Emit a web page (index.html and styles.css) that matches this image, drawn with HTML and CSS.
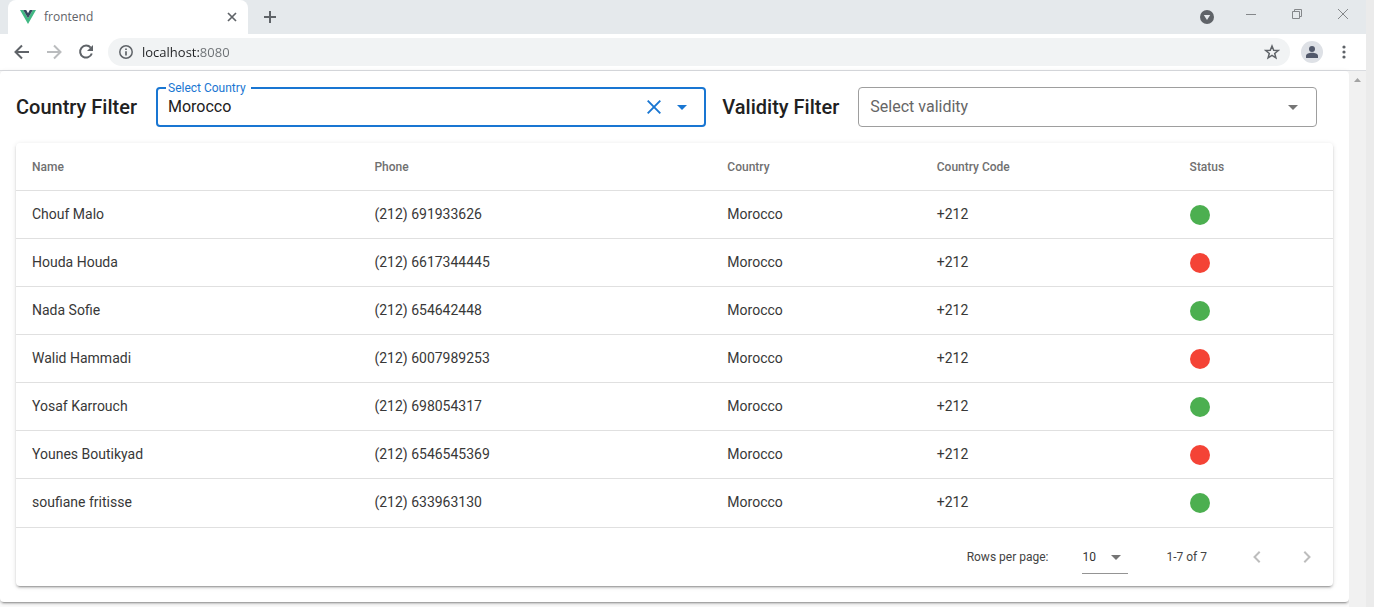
FILE: index.html
```html
<!DOCTYPE html>
<html lang="en">
<head>
<meta charset="utf-8">
<title>frontend</title>
<link rel="stylesheet" href="styles.css">
</head>
<body>
<div class="window">
  <header class="chrome">
    <div class="tabstrip">
      <div class="tab">
        <svg class="logo" width="16" height="16" viewBox="0 0 16 16"><path fill="#41b883" d="M0 1h3.2L8 9.3 12.8 1H16L8 15z"/><path fill="#35495e" d="M3.2 1h3L8 4.2 9.8 1h3L8 9.3z"/></svg>
        <span class="tab-title">frontend</span>
        <button class="plain tab-close" aria-label="Close tab"><svg width="10" height="10" viewBox="0 0 10 10" fill="none" stroke="#5f6368" stroke-width="1.7"><path d="M1 1l8 8M9 1L1 9"/></svg></button>
      </div>
      <button class="plain new-tab" aria-label="New tab"><svg width="12" height="12" viewBox="0 0 12 12" fill="none" stroke="#5f6368" stroke-width="2"><path d="M6 0v12M0 6h12"/></svg></button>
      <div class="window-controls">
        <button class="plain search-tabs" aria-label="Search tabs"><svg width="14" height="14" viewBox="0 0 14 14"><circle cx="7" cy="7" r="7" fill="#5f6368"/><path fill="#e7eaed" d="M3.8 5h6.4L7 10z"/></svg></button>
        <button class="plain control" aria-label="Minimize"><svg width="12" height="12" viewBox="0 0 12 12" fill="none" stroke="#84878a"><path d="M1 6.5h10"/></svg></button>
        <button class="plain control" aria-label="Restore"><svg width="12" height="12" viewBox="0 0 12 12" fill="none" stroke="#84878a"><path d="M1.500 3.500h7v7h-7zM3.500 3.500v-2h7v7h-2"/></svg></button>
        <button class="plain control" aria-label="Close"><svg width="12" height="12" viewBox="0 0 12 12" fill="none" stroke="#84878a"><path d="M1 1l10 10M11 1L1 11"/></svg></button>
      </div>
    </div>
    <div class="toolbar">
      <button class="plain nav" aria-label="Back"><svg width="16" height="16" viewBox="0 0 16 16" fill="none" stroke="#5f6368" stroke-width="2"><path d="M15 8H2.500M8 1.500L1.500 8 8 14.500"/></svg></button>
      <button class="plain nav" aria-label="Forward"><svg width="16" height="16" viewBox="0 0 16 16" fill="none" stroke="#babcbe" stroke-width="2"><path d="M1 8h12.500M8 1.500L14.500 8 8 14.500"/></svg></button>
      <button class="plain nav" aria-label="Reload"><svg width="16" height="16" viewBox="0 0 16 16"><path fill="none" stroke="#5f6368" stroke-width="2" d="M12.700 3.700A6 6 0 1 0 13.800 9.500"/><path fill="#5f6368" d="M15 1v6H9z"/></svg></button>
      <div class="address">
        <svg width="14" height="14" viewBox="0 0 14 14" fill="none" stroke="#5f6368"><circle cx="7" cy="7" r="6.200" stroke-width="1.500"/><path stroke-width="1.700" d="M7 6.200v4.300M7 3.400v1.700"/></svg>
        <input class="url" type="text" aria-label="Address" value="localhost:8080">
        <button class="plain star" aria-label="Bookmark"><svg width="16" height="16" viewBox="0 0 16 16" fill="none" stroke="#5f6368" stroke-width="1.500"><path d="M8 2l1.700 4.200 4.500.3-3.500 2.900 1.200 4.400L8 11.400l-3.900 2.400 1.200-4.400-3.500-2.900 4.500-.3z"/></svg></button>
      </div>
      <button class="plain profile" aria-label="Profile"><svg width="14" height="14" viewBox="0 0 14 14" fill="#52596b"><circle cx="7" cy="4" r="3"/><path d="M1 13v-2c0-2 3-3.200 6-3.200s6 1.200 6 3.200v2z"/></svg></button>
      <button class="plain more" aria-label="Menu"><svg width="4" height="14" viewBox="0 0 4 14" fill="#5f6368"><circle cx="2" cy="2" r="1.600"/><circle cx="2" cy="7" r="1.600"/><circle cx="2" cy="12" r="1.600"/></svg></button>
    </div>
  </header>
  <div class="viewport">
    <main class="page">
      <section class="card outer">
        <div class="filters">
          <h2 class="filter-title">Country Filter</h2>
          <div class="field field-country">
            <label class="field-label" for="country">Select Country</label>
            <input class="field-input" id="country" type="text" value="Morocco">
            <button class="plain clear" aria-label="Clear"><svg width="14" height="14" viewBox="0 0 14 14" fill="none" stroke="#1976d2" stroke-width="1.900"><path d="M.7.700l12.600 12.600M13.300.7L.7 13.300"/></svg></button>
            <svg class="caret" width="10" height="5" viewBox="0 0 10 5" fill="#1976d2"><path d="M0 0h10L5 5z"/></svg>
          </div>
          <h2 class="filter-title">Validity Filter</h2>
          <div class="field field-validity">
            <select class="field-select" aria-label="Select validity"><option>Select validity</option><option>Valid</option><option>Not valid</option></select>
            <svg class="caret caret-over" width="10" height="5" viewBox="0 0 10 5" fill="#757575"><path d="M0 0h10L5 5z"/></svg>
          </div>
        </div>
        <div class="card inner">
          <table class="phones">
            <colgroup><col class="c-name"><col class="c-phone"><col class="c-country"><col class="c-code"><col></colgroup>
            <thead><tr><th>Name</th><th>Phone</th><th>Country</th><th>Country Code</th><th>Status</th></tr></thead>
            <tbody>
              <tr><td>Chouf Malo</td><td>(212) 691933626</td><td>Morocco</td><td>+212</td><td class="status"><span class="dot valid"></span></td></tr>
              <tr><td>Houda Houda</td><td>(212) 6617344445</td><td>Morocco</td><td>+212</td><td class="status"><span class="dot invalid"></span></td></tr>
              <tr><td>Nada Sofie</td><td>(212) 654642448</td><td>Morocco</td><td>+212</td><td class="status"><span class="dot valid"></span></td></tr>
              <tr><td>Walid Hammadi</td><td>(212) 6007989253</td><td>Morocco</td><td>+212</td><td class="status"><span class="dot invalid"></span></td></tr>
              <tr><td>Yosaf Karrouch</td><td>(212) 698054317</td><td>Morocco</td><td>+212</td><td class="status"><span class="dot valid"></span></td></tr>
              <tr><td>Younes Boutikyad</td><td>(212) 6546545369</td><td>Morocco</td><td>+212</td><td class="status"><span class="dot invalid"></span></td></tr>
              <tr><td>soufiane fritisse</td><td>(212) 633963130</td><td>Morocco</td><td>+212</td><td class="status"><span class="dot valid"></span></td></tr>
            </tbody>
          </table>
          <footer class="pager">
            <label for="rows">Rows per page:</label>
            <div class="rows-field">
              <select class="rows" id="rows"><option>10</option><option>15</option></select>
              <svg class="caret rows-caret" width="10" height="5" viewBox="0 0 10 5" fill="#757575"><path d="M0 0h10L5 5z"/></svg>
            </div>
            <span class="range">1-7 of 7</span>
            <button class="plain page-btn" aria-label="Previous page" disabled><svg width="8" height="12" viewBox="0 0 8 12" fill="none" stroke="#bdbdbd" stroke-width="2"><path d="M6.700.700L1.500 6l5.200 5.300"/></svg></button>
            <button class="plain page-btn" aria-label="Next page" disabled><svg width="8" height="12" viewBox="0 0 8 12" fill="none" stroke="#bdbdbd" stroke-width="2"><path d="M1.300.7L6.500 6l-5.200 5.300"/></svg></button>
          </footer>
        </div>
      </section>
    </main>
    <div class="scrollbar"><svg width="7" height="4" viewBox="0 0 7 4" fill="#a3a3a3"><path d="M0 4h7L3.500 0z"/></svg></div>
  </div>
</div>
</body>
</html>
```
FILE: styles.css
```css
* { box-sizing: border-box; }
body {
  margin: 0;
  padding-right: 8px;
  background: #ebebeb;
  font-family: Roboto, "Liberation Sans", sans-serif;
  color: #212121;
}
.window {
  display: flex;
  flex-direction: column;
  min-height: 100vh;
  background: #fff;
}
.plain {
  display: flex;
  align-items: center;
  justify-content: center;
  padding: 0;
  border: 0;
  background: none;
}

/* Browser frame */
.chrome { border-bottom: 1px solid #dadce0; font-family: "Open Sans", sans-serif; }
.tabstrip { display: flex; height: 34px; padding-left: 8px; background: #e5e9ec; }
.tab {
  display: flex;
  align-items: center;
  width: 240px;
  padding: 0 10px 0 12px;
  gap: 8px;
  border-radius: 8px 8px 0 0;
  background: #fff;
}
.tab-title { flex: 1; font-size: 12px; line-height: 16px; color: #5f6368; }
.tab-close { width: 12px; height: 16px; }
.new-tab { width: 28px; margin-left: 8px; }
.window-controls { display: flex; margin-left: auto; height: 28px; }
.search-tabs { width: 42px; height: 34px; }
.control { width: 46px; }
.toolbar { display: flex; align-items: center; height: 36px; padding: 0 14px 0 6px; }
.nav { width: 32px; height: 32px; }
.address {
  display: flex;
  align-items: center;
  flex: 1;
  height: 28px;
  margin-left: 6px;
  padding: 0 10px 0 11px;
  gap: 9px;
  border-radius: 14px;
  background: #f1f3f4;
}
.url {
  flex: 1;
  min-width: 0;
  padding: 0;
  border: 0;
  outline: 0;
  font: 13px/20px "Open Sans", sans-serif;
  color: transparent;
  background: linear-gradient(to right, #202124 58px, #6b6f73 58px);
  background-clip: text;
  -webkit-background-clip: text;
}
.profile { width: 22px; height: 22px; margin-left: 11px; border-radius: 50%; background: #dee1e6; }
.more { width: 16px; height: 28px; margin-left: 13px; }

/* Page */
.viewport { display: flex; flex: 1; }
.page { flex: 1; min-width: 0; background: #fafafa; }
.scrollbar { display: flex; justify-content: center; width: 17px; padding-top: 7px; background: #f1f1f1; }
.card {
  border-radius: 4px;
  background: #fff;
  box-shadow: 0 3px 1px -2px rgba(0,0,0,.2), 0 2px 2px 0 rgba(0,0,0,.14), 0 1px 5px 0 rgba(0,0,0,.12);
}
.outer { padding: 16px; }
.filters {
  display: grid;
  grid-template-columns: minmax(124px, auto) 6fr minmax(120px, auto) 5fr;
  align-items: center;
  gap: 16px;
  padding: 0 16px 16px 0;
}
.filter-title { margin: 0; font-size: 20px; line-height: 32px; font-weight: 500; white-space: nowrap; }
.field {
  position: relative;
  display: flex;
  align-items: center;
  min-width: 0;
  height: 40px;
  border-radius: 4px;
}
.field-country { padding: 0 17px 0 10px; border: 2px solid #1976d2; }
.field-validity { border: 1px solid #9e9e9e; }
.field-label {
  position: absolute;
  top: -8px;
  left: 8px;
  padding: 0 5px 0 2px;
  font-size: 12px;
  line-height: 14px;
  color: #1976d2;
  background: #fff;
}
.field-input, .field-select {
  flex: 1;
  min-width: 0;
  padding: 0;
  border: 0;
  outline: 0;
  font: 16px/20px Roboto, sans-serif;
  color: #212121;
  background: none;
}
.field-select { appearance: none; height: 38px; padding: 0 36px 0 11px; color: #666; }
.clear { width: 24px; height: 24px; margin-right: 11px; }
.caret { flex: none; }
.caret-over { position: absolute; right: 18px; pointer-events: none; }

.inner, .phones { width: 100%; }
.phones { border-collapse: separate; border-spacing: 0; table-layout: fixed; }
.c-name { width: 26%; }
.c-phone { width: 26.8%; }
.c-country { width: 15.9%; }
.c-code { width: 19.2%; }
.phones th, .phones td {
  height: 48px;
  padding: 0 16px;
  border-bottom: 1px solid #e0e0e0;
  text-align: left;
  font-size: 14px;
  line-height: 20px;
  white-space: nowrap;
}
.phones th { font-size: 12px; font-weight: 500; color: #707070; }
.phones td { padding-bottom: 2px; color: #383838; }
.phones .status { padding-bottom: 0; }
.phones tr:last-child td { height: 49px; }
.phones thead tr:last-child th { height: 48px; }
.dot { display: block; width: 20px; height: 20px; border-radius: 50%; }
.valid { background: #4caf50; }
.invalid { background: #f44336; }
.pager { display: flex; align-items: center; justify-content: flex-end; height: 58px; padding-right: 14px; font-size: 12px; color: #444; }
.rows-field { position: relative; display: flex; align-items: center; margin: 0 38px 0 34px; }
.rows {
  appearance: none;
  width: 46px;
  height: 34px;
  padding: 0;
  border: 0;
  border-bottom: 1px solid #949494;
  border-radius: 0;
  font: 12px/16px Roboto, sans-serif;
  color: #333;
  background: none;
}
.rows-caret { position: absolute; right: 7px; pointer-events: none; }
.range { margin-right: 38px; }
.page-btn { width: 24px; height: 24px; }
.page-btn + .page-btn { margin-left: 26px; }
```
